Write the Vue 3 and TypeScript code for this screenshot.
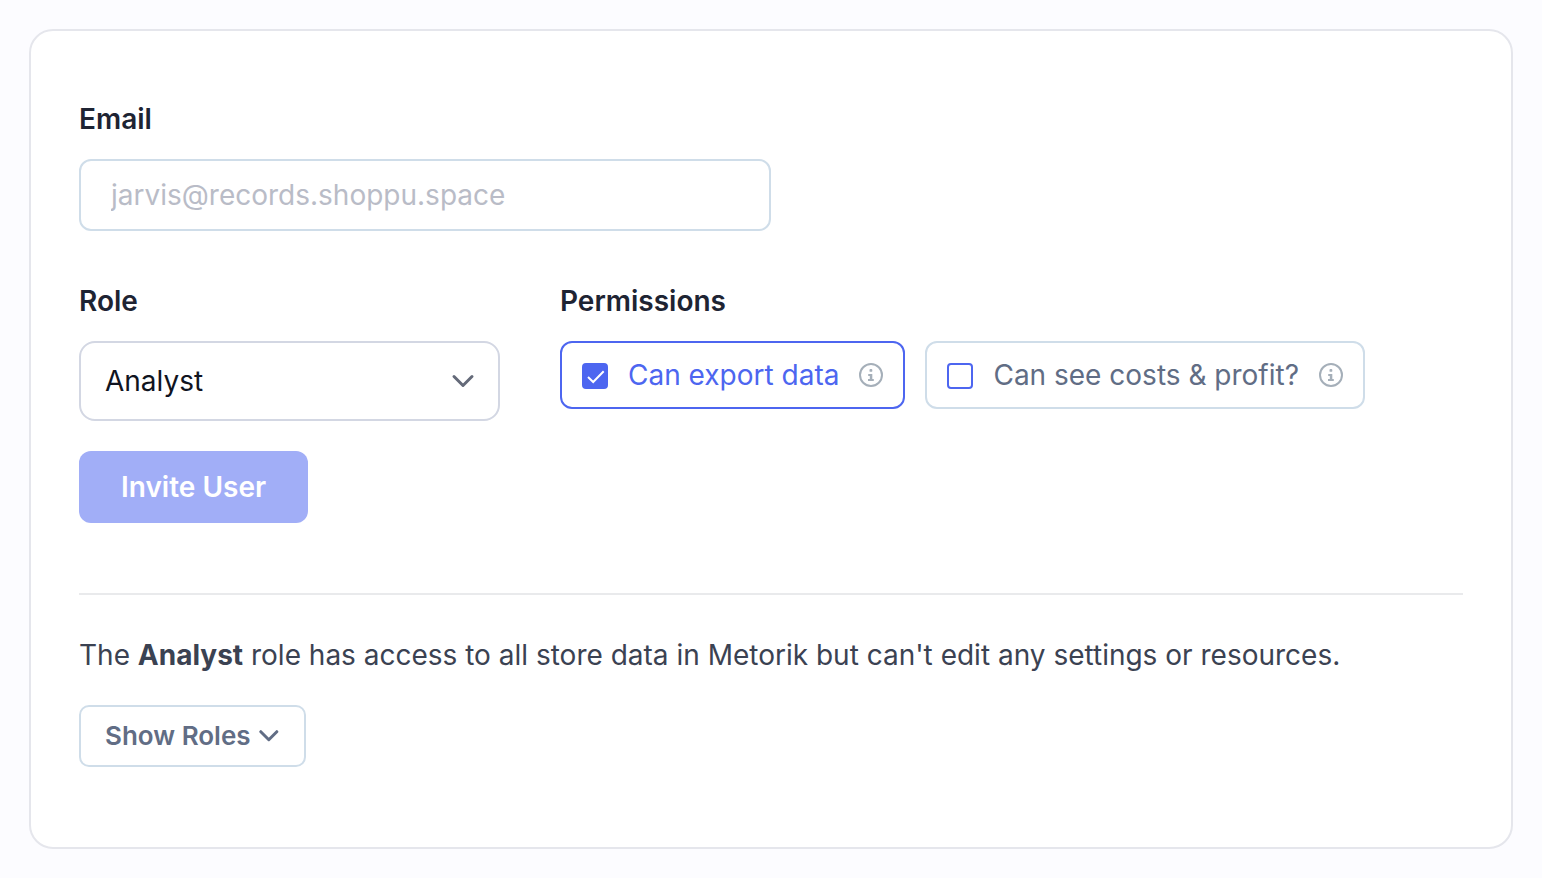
<script setup lang="ts">
import { computed, ref } from 'vue'

interface Role {
  name: string
  summary: string
}

interface Permission {
  id: string
  label: string
  granted: boolean
}

const roles: Role[] = [
  {
    name: 'Analyst',
    summary: "role has access to all store data in Metorik but can't edit any settings or resources.",
  },
]

const email = ref('')
const selected = ref('Analyst')
const permissions = ref<Permission[]>([
  { id: 'export', label: 'Can export data', granted: true },
  { id: 'costs', label: 'Can see costs & profit?', granted: false },
])

const role = computed(() => roles.find((r) => r.name === selected.value) ?? roles[0])
</script>

<template>
  <main class="page">
    <section class="card">
      <form @submit.prevent>
        <div class="field email">
          <label class="title" for="email">Email</label>
          <input id="email" v-model="email" class="text-box" type="email" placeholder="jarvis@records.shoppu.space" />
        </div>

        <div class="row">
          <div class="field role">
            <label class="title" for="role">Role</label>
            <div class="select">
              <select id="role" v-model="selected">
                <option v-for="r in roles" :key="r.name">{{ r.name }}</option>
              </select>
              <svg class="chevron" width="24" height="16" viewBox="0 0 24 16" aria-hidden="true">
                <path d="M3 3.5 12 12.5 21 3.5" />
              </svg>
            </div>
          </div>

          <fieldset class="field permissions">
            <legend class="title">Permissions</legend>
            <div class="options">
              <label v-for="p in permissions" :key="p.id" class="option" :class="{ on: p.granted }" :for="p.id">
                <input :id="p.id" v-model="p.granted" type="checkbox" />
                <svg class="tick" viewBox="0 0 26 26" aria-hidden="true">
                  <path d="M6 14 11.2 19 21.7 8.3" />
                </svg>
                <span>{{ p.label }}</span>
                <svg class="info" width="24" height="24" viewBox="0 0 24 24" aria-hidden="true">
                  <circle cx="12" cy="12" r="11" />
                  <rect x="10.5" y="6" width="2.8" height="2.8" rx="0.9" />
                  <path d="M9.2 11.1H13.3V16H14.8V18H9V16H10.8V13.1H9.2Z" />
                </svg>
              </label>
            </div>
          </fieldset>
        </div>

        <button class="invite" type="submit" :disabled="!email">Invite User</button>
      </form>

      <div class="about">
        <p>The <strong>{{ role.name }}</strong> {{ role.summary }}</p>
        <button class="show-roles" type="button">
          Show Roles
          <svg class="chevron" width="21" height="14" viewBox="0 0 21 14" aria-hidden="true">
            <path d="M1.8 2.7 9.8 10.7 17.8 2.7" />
          </svg>
        </button>
      </div>
    </section>
  </main>
</template>

<style>
body {
  margin: 0;
  background: #fcfcff;
}
</style>

<style scoped>
.page {
  padding: 29px;
  font: 400 28px/40px Inter, sans-serif;
  color: #3b4252;
}

.page * {
  box-sizing: border-box;
}

.card {
  padding: 68px 48px 80px;
  border: 2px solid #e5e6ec;
  border-radius: 24px;
  background: #fff;
}

input,
select,
button {
  margin: 0;
  font: inherit;
}

.field {
  display: flex;
  flex-direction: column;
  min-width: 0;
  margin: 0;
  padding: 0;
  border: 0;
}

.title {
  padding: 0;
  margin-bottom: 20px;
  font-weight: 600;
  color: #1e2433;
}

.email {
  width: 50%;
  margin-bottom: 50px;
}

.text-box {
  width: 100%;
  height: 72px;
  padding: 0 30px;
  border: 2px solid #cfdde9;
  border-radius: 12px;
  background: #fff;
  color: #1e2433;
}

.text-box::placeholder {
  color: #b9bcc7;
  opacity: 1;
}

.row {
  display: flex;
  gap: 60px;
}

.role {
  flex: 0 1 421px;
}

.select {
  display: grid;
  align-items: center;
}

.select > * {
  grid-area: 1 / 1;
}

.select select {
  width: 100%;
  height: 80px;
  padding: 0 24px;
  border: 2px solid #d3d7e3;
  border-radius: 16px;
  background: #fff;
  color: #10141f;
  appearance: none;
}

.select .chevron {
  justify-self: end;
  margin-right: 25px;
  color: #646a79;
  pointer-events: none;
}

.chevron path {
  fill: none;
  stroke: currentColor;
  stroke-width: 3;
  stroke-linecap: round;
  stroke-linejoin: round;
}

.options {
  display: flex;
  gap: 20px;
}

.option {
  display: grid;
  grid-template-columns: 26px auto 24px;
  column-gap: 20px;
  align-items: start;
  padding: 20px 20px 18px;
  border: 2px solid #cfdde9;
  border-radius: 12px;
  line-height: 24px;
  color: #616d85;
  white-space: nowrap;
}

.option.on {
  border-color: #4d66f0;
  color: #4d66f0;
}

.option input {
  grid-area: 1 / 1;
  width: 26px;
  height: 26px;
  border: 2px solid #4d66f0;
  border-radius: 4px;
  background: #fff;
  appearance: none;
}

.option input:checked {
  background: #4d66f0;
}

.tick {
  grid-area: 1 / 1;
  width: 26px;
  height: 26px;
  pointer-events: none;
}

.tick path {
  fill: none;
  stroke: #fff;
  stroke-width: 2;
}

.info {
  fill: #a5afb9;
}

.info circle {
  fill: none;
  stroke: #a5afb9;
  stroke-width: 2;
}

.invite {
  display: block;
  height: 72px;
  margin-top: 30px;
  padding: 0 42px;
  border: 0;
  border-radius: 12px;
  background: #a1aef7;
  color: #fff;
  font-weight: 600;
}

.about {
  margin-top: 70px;
  border-top: 2px solid #e9eaec;
}

.about p {
  margin: 40px 0 30px;
}

.about strong {
  font-weight: 700;
}

.show-roles {
  display: flex;
  align-items: center;
  gap: 8px;
  height: 62px;
  padding: 0 24px;
  border: 2px solid #cfdde9;
  border-radius: 10px;
  background: #fff;
  color: #616d85;
  font-size: 26px;
  font-weight: 600;
}
</style>
